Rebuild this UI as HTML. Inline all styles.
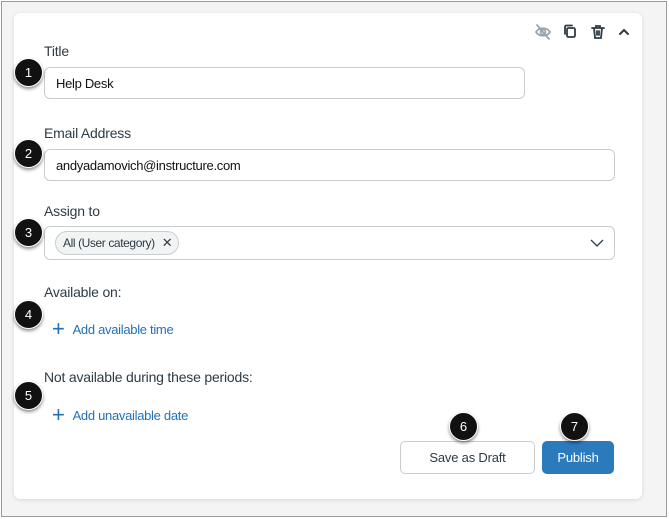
<!DOCTYPE html><html><head><style>
body{margin:0;width:669px;height:519px;background:#fff;font-family:"Liberation Sans",sans-serif;position:relative;overflow:hidden}
.frame{position:absolute;left:1px;top:1px;width:664px;height:514px;border:1px solid #9a9a9a;background:#f4f4f5}
.card{position:absolute;left:14px;top:13px;width:628px;height:486px;background:#fff;border-radius:6px;box-shadow:0 1px 4px rgba(0,0,0,.12)}
.abs{position:absolute}
.lbl{position:absolute;left:44px;font-size:14px;color:#2d3b45;letter-spacing:-0.2px}
.inp{position:absolute;left:44px;border:1px solid #c7cdd1;border-radius:6px;background:#fff;font-size:13px;color:#111;box-sizing:border-box;padding-left:11px;display:flex;align-items:center;letter-spacing:-0.3px}
.b{position:absolute;width:27px;height:27px;border-radius:50%;background:#111;color:#fff;font-size:13px;display:flex;align-items:center;justify-content:center;box-shadow:0 2px 3px rgba(0,0,0,.45);border:1px solid #fff}
.link{position:absolute;left:52px;font-size:13px;color:#2470b8;display:flex;align-items:center;letter-spacing:-0.3px}
.link span.p{font-size:22px;margin-right:8px;font-weight:300;line-height:1}
.btn{position:absolute;border-radius:5px;font-size:13px;display:flex;align-items:center;justify-content:center;box-sizing:border-box;letter-spacing:-0.2px}
</style></head><body>
<div class="frame"></div>
<div class="card"></div>
<svg class="abs" style="left:534px;top:23px" width="100" height="18" viewBox="0 0 100 18" fill="none" stroke-width="1.8" stroke-linecap="round">
<g stroke="#9aa5ad"><path d="M2 9c3-5 11-5 14 0c-3 5-11 5-14 0z"/><circle cx="9" cy="9" r="2.5"/><path d="M3 2l12 14"/></g>
<g stroke="#2d3b45"><rect x="33" y="5" width="8" height="9" rx="1.5"/><path d="M31 11V4a1.5 1.5 0 0 1 1.5-1.5H38"/>
<path d="M58 5h12M62 5V3h4v2M60 5l1 10h6l1-10M63 8v4M65 8v4"/>
<path d="M86 11l4-4 4 4" stroke-width="2"/></g></svg>
<div class="lbl" style="top:43px">Title</div>
<div class="inp" style="top:67px;width:481px;height:32px">Help Desk</div>
<div class="b" style="left:14px;top:58px">1</div>
<div class="lbl" style="top:125px">Email Address</div>
<div class="inp" style="top:149px;width:571px;height:32px">andyadamovich@instructure.com</div>
<div class="b" style="left:14px;top:139px">2</div>
<div class="lbl" style="top:203px">Assign to</div>
<div class="inp" style="top:226px;width:571px;height:34px;padding-left:10px">
<div style="border:1px solid #c7cdd1;background:#f2f4f4;border-radius:12px;height:22px;padding:0 6px 0 7px;display:flex;align-items:center;font-size:12px;color:#2d3b45;letter-spacing:-0.4px">All (User category)<span style="margin-left:7px;font-size:13px">✕</span></div>
<svg class="abs" style="right:10px;top:12px" width="14" height="9"><path d="M1 1l6 6 6-6" fill="none" stroke="#2d3b45" stroke-width="1.3"/></svg></div>
<div class="b" style="left:14px;top:218px">3</div>
<div class="lbl" style="top:284px">Available on:</div>
<div class="link" style="top:318px"><span class="p">+</span>Add available time</div>
<div class="b" style="left:14px;top:300px">4</div>
<div class="lbl" style="top:369px">Not available during these periods:</div>
<div class="link" style="top:404px"><span class="p">+</span>Add unavailable date</div>
<div class="b" style="left:14px;top:381px">5</div>
<div class="btn" style="left:400px;top:441px;width:135px;height:33px;border:1px solid #c7cdd1;color:#2d3b45;background:#fff">Save as Draft</div>
<div class="btn" style="left:542px;top:441px;width:72px;height:33px;background:#2b7abc;color:#fff">Publish</div>
<div class="b" style="left:449px;top:412px">6</div>
<div class="b" style="left:560px;top:412px">7</div>
</body></html>
